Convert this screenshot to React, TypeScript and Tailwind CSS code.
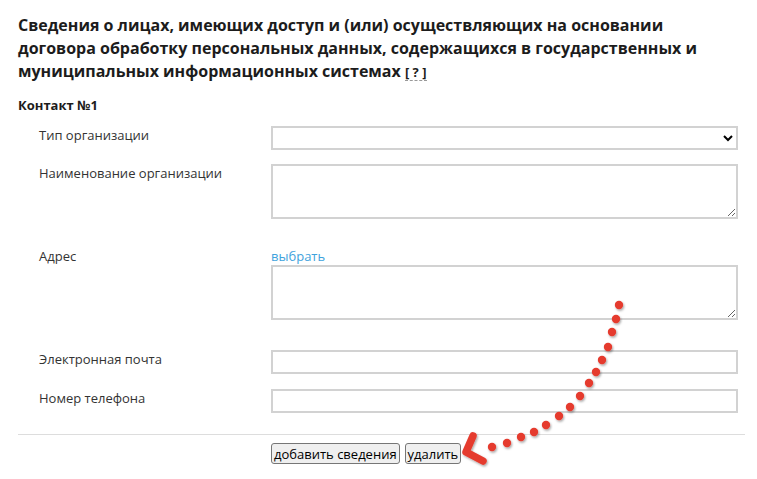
import React from "react";

const dots: [number, number][] = [
  [619, 305], [616, 319], [612, 332], [608, 347], [602, 360], [596, 372],
  [589, 383], [580, 396], [570, 407], [559, 416], [546, 425], [534, 432],
  [521, 437], [507, 443], [492, 447],
];

function Arrow() {
  return (
    <svg className="pointer-events-none absolute left-0 top-0" width="757" height="479">
      <defs>
        <filter id="sh" x="-50%" y="-50%" width="200%" height="200%">
          <feDropShadow dx="1" dy="1.5" stdDeviation="0.8" floodColor="#000" floodOpacity="0.35" />
        </filter>
      </defs>
      <g filter="url(#sh)" fill="#e53b2f">
        {dots.map(([x, y], i) => (
          <circle key={i} cx={x} cy={y} r="4.2" />
        ))}
        <path
          d="M473 436 L466 452 L483 461"
          fill="none"
          stroke="#e53b2f"
          strokeWidth="7.5"
          strokeLinecap="round"
          strokeLinejoin="round"
        />
      </g>
    </svg>
  );
}

function Row({ label, children, className = "" }: { label: string; children: React.ReactNode; className?: string }) {
  return (
    <div className={`grid grid-cols-[232px_1fr] ${className}`}>
      <div className="text-[13px] leading-[18px] text-[#333]">{label}</div>
      <div>{children}</div>
    </div>
  );
}

const field = "block w-full border-2 border-[#d2d2d2] bg-white";

export default function App() {
  return (
    <div className="relative h-[479px] w-[757px] overflow-hidden bg-white font-['Open_Sans',sans-serif]">
      <div className="pl-[18px] pr-[12px] pt-[14px]">
        <h1 className="max-w-[712px] text-[16px] font-bold leading-[23px] text-[#1c1c1c]">
          Сведения о лицах, имеющих доступ и (или) осуществляющих на основании договора обработку персональных данных, содержащихся в государственных и муниципальных информационных системах{" "}
          <span className="inline-block border-b border-dashed border-[#999] text-[13px] leading-[15px]">[ ? ]</span>
        </h1>
        <div className="mt-[13px] text-[13px] font-bold leading-[18px] text-[#1c1c1c]">Контакт №1</div>

        <div className="pl-[21px] pr-[7px] pt-[12px]">
          <Row label="Тип организации">
            <select className={`${field} h-[24px] text-[13px]`}>
              <option></option>
            </select>
          </Row>
          <Row label="Наименование организации" className="mt-[14px]">
            <textarea className={`${field} h-[55px]`} />
          </Row>
          <Row label="Адрес" className="mt-[28px]">
            <div className="text-[13px] leading-[18px] text-[#3fa3dd]">выбрать</div>
            <textarea className={`${field} h-[55px]`} />
          </Row>
          <Row label="Электронная почта" className="mt-[30px]">
            <input className={`${field} h-[24px]`} />
          </Row>
          <Row label="Номер телефона" className="mt-[15px]">
            <input className={`${field} h-[24px]`} />
          </Row>
        </div>

        <div className="mt-[21px] border-t border-[#ddd]" />
        <div className="flex gap-[5px] pl-[253px] pt-[8px]">
          <button className="h-[21px] rounded-[3px] border border-[#767676] bg-[#efefef] px-[2px] text-[13px] leading-[18px] text-black">
            добавить сведения
          </button>
          <button className="h-[21px] rounded-[3px] border border-[#767676] bg-[#efefef] px-[2px] text-[13px] leading-[18px] text-black">
            удалить
          </button>
        </div>
      </div>
      <Arrow />
    </div>
  );
}
